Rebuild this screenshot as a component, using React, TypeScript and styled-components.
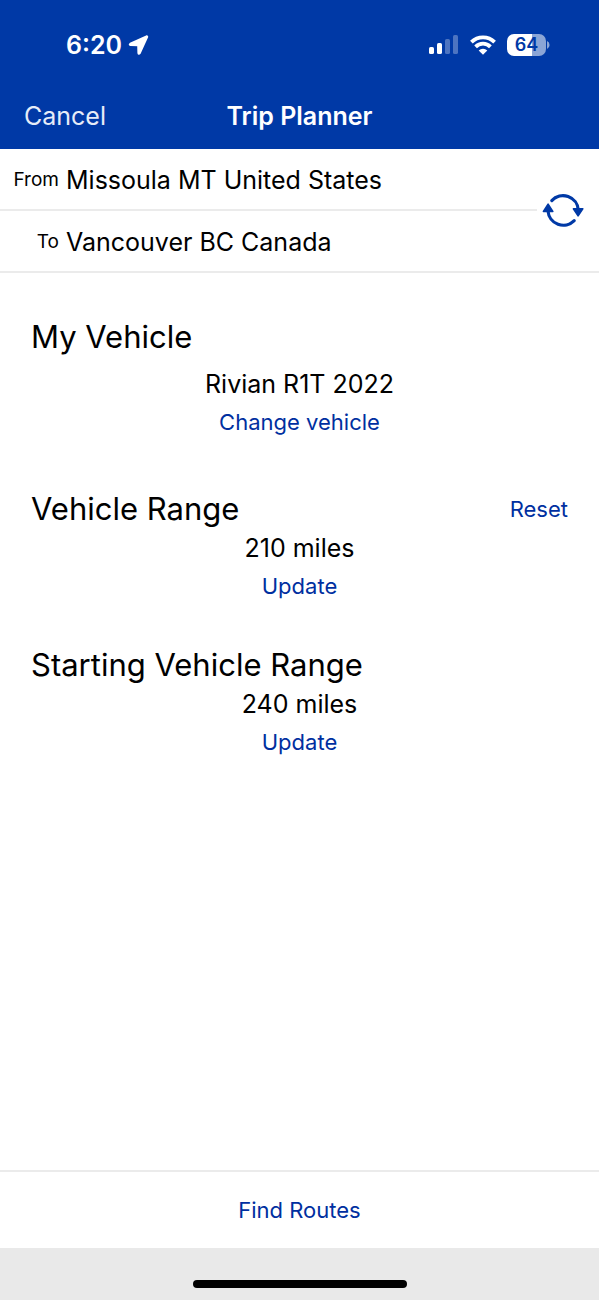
import React from 'react';
import styled, { createGlobalStyle } from 'styled-components';

const GlobalStyle = createGlobalStyle`
  *, *::before, *::after { box-sizing: border-box; }
  body {
    margin: 0;
    background: #fff;
    color: #000;
    font-family: Inter, "Liberation Sans", sans-serif;
  }
  button, input { font: inherit; color: inherit; }
`;

const Screen = styled.div`
  display: flex;
  flex-direction: column;
  min-height: 100vh;
`;

const Header = styled.header`
  background: #0039a6;
  color: #fff;
`;

const StatusBar = styled.div`
  display: flex;
  align-items: center;
  justify-content: space-between;
  height: 82px;
  padding: 8px 49px 0 66px;
`;

const StatusGroup = styled.div<{ $gap: number }>`
  display: flex;
  align-items: center;
  gap: ${(p) => p.$gap}px;
`;

const Clock = styled.span`
  font-size: 25px;
  line-height: 32px;
  font-weight: 600;
`;

const Battery = styled.div`
  display: flex;
  align-items: center;
  gap: 1px;
`;

const BatteryBody = styled.div<{ $level: number }>`
  width: 39px;
  height: 22px;
  border-radius: 7px;
  background: linear-gradient(to right, #fff ${(p) => p.$level}%, #8ba5d6 ${(p) => p.$level}%);
  color: #0039a6;
  font-size: 18px;
  line-height: 22px;
  font-weight: 600;
  text-align: center;
`;

const NavBar = styled.div`
  display: grid;
  grid-template-columns: 1fr auto 1fr;
  align-items: center;
  height: 67px;
  padding: 0 24px;
`;

const Title = styled.h1`
  margin: 0;
  font-size: 25px;
  line-height: 32px;
  font-weight: 600;
`;

const TextButton = styled.button<{ $color?: string; $size?: number }>`
  border: 0;
  padding: 0;
  background: none;
  cursor: pointer;
  color: ${(p) => p.$color ?? '#002fa0'};
  font-size: ${(p) => p.$size ?? 22}px;
  line-height: 32px;
`;

const CancelButton = styled(TextButton)`
  justify-self: start;
`;

const RouteForm = styled.form`
  display: grid;
  grid-template-columns: 1fr 62px;
  border-bottom: 2px solid #ebebeb;
`;

const RouteRow = styled.div<{ $divided?: boolean }>`
  display: flex;
  align-items: center;
  gap: 7px;
  height: ${(p) => (p.$divided ? 62 : 60)}px;
  padding-top: 2px;
  border-bottom: ${(p) => (p.$divided ? '2px solid #ebebeb' : '0')};
`;

const RouteLabel = styled.label`
  flex: 0 0 59px;
  text-align: right;
  font-size: 19px;
  line-height: 32px;
`;

const RouteInput = styled.input`
  flex: 1;
  min-width: 0;
  border: 0;
  padding: 0;
  outline: 0;
  background: none;
  font-size: 25px;
  line-height: 32px;
`;

const SwapButton = styled.button`
  display: flex;
  align-items: center;
  justify-content: center;
  border: 0;
  padding: 2px 10px 0 0;
  background: none;
  cursor: pointer;
`;

const Main = styled.main`
  flex: 1;
  display: flex;
  flex-direction: column;
  gap: 40px;
  padding: 44px 31px;
`;

const Section = styled.section<{ $after?: number }>`
  display: flex;
  flex-direction: column;
  padding-bottom: ${(p) => p.$after ?? 0}px;
`;

const SectionHead = styled.div<{ $space?: number }>`
  display: flex;
  align-items: center;
  justify-content: space-between;
  margin-bottom: ${(p) => p.$space ?? 0}px;
`;

const SectionTitle = styled.h2`
  margin: 0;
  font-size: 31px;
  line-height: 40px;
  font-weight: 400;
`;

const Value = styled.p`
  margin: 0;
  font-size: 25px;
  line-height: 38px;
  text-align: center;
`;

const SectionAction = styled(TextButton)`
  align-self: center;
  line-height: 38px;
`;

const Footer = styled.footer`
  display: flex;
  flex-direction: column;
  border-top: 2px solid #ebebeb;
`;

const FindButton = styled(TextButton)`
  height: 76px;
`;

const HomeArea = styled.div`
  display: flex;
  justify-content: center;
  height: 52px;
  padding-top: 32px;
  background: #e9e9e9;
`;

const HomeIndicator = styled.div`
  width: 214px;
  height: 8px;
  border-radius: 4px;
  background: #000;
`;

const LocationIcon = () => (
  <svg width="21" height="20" viewBox="0 0 20 20" aria-hidden="true">
    <path
      d="M18 1.2 1.8 8.6q-1.4 1.2.2 1.6l7.6.2.2 7.6q.4 1.8 1.6.2L18.8 2q.2-1-.8-.8Z"
      fill="#fff"
      stroke="#fff"
      strokeWidth="1.8"
      strokeLinejoin="round"
    />
  </svg>
);

const SignalIcon = () => (
  <svg width="30" height="20" viewBox="0 0 30 20" aria-hidden="true" fill="#fff">
    <rect x="0" y="12" width="5" height="7" rx="1.6" />
    <rect x="8" y="8" width="5" height="11" rx="1.6" />
    <rect x="16" y="4" width="5" height="15" rx="1.6" opacity=".3" />
    <rect x="24" y="0" width="5" height="19" rx="1.6" opacity=".3" />
  </svg>
);

const WifiIcon = () => (
  <svg width="26" height="20" viewBox="0 0 26 20" aria-hidden="true">
    <g fill="none" stroke="#fff" strokeWidth="3.8">
      <path d="M1.4 7.2a16.4 16.4 0 0 1 23.2 0" />
      <path d="M5.6 11.8a10.4 10.4 0 0 1 14.8 0" />
    </g>
    <path d="M13 19.8 8.7 15.5a6.1 6.1 0 0 1 8.6 0Z" fill="#fff" />
  </svg>
);

const BatteryCap = () => (
  <svg width="3" height="8" viewBox="0 0 3 8" aria-hidden="true">
    <path d="M0 0q2.6 1.2 2.6 4T0 8Z" fill="#8ba5d6" />
  </svg>
);

const SwapIcon = () => (
  <svg width="42" height="36" viewBox="0 0 42 36" aria-hidden="true">
    <g fill="none" stroke="#0039a6" strokeWidth="3.2" strokeLinecap="round">
      <path d="M9.8 7.6A15.3 15.3 0 0 1 36.3 17" />
      <path d="M32.2 27.6A15.3 15.3 0 0 1 6 18" />
    </g>
    <g fill="#0039a6" stroke="#0039a6" strokeWidth="1.6" strokeLinejoin="round">
      <path d="M31.4 15.8h9.4l-4.7 7Z" />
      <path d="M1.4 18.4h9.4L6.1 11.2Z" />
    </g>
  </svg>
);

export default function App() {
  return (
    <Screen>
      <GlobalStyle />
      <Header>
        <StatusBar>
          <StatusGroup $gap={6}>
            <Clock>6:20</Clock>
            <LocationIcon />
          </StatusGroup>
          <StatusGroup $gap={11}>
            <SignalIcon />
            <WifiIcon />
            <Battery>
              <BatteryBody $level={64}>64</BatteryBody>
              <BatteryCap />
            </Battery>
          </StatusGroup>
        </StatusBar>
        <NavBar>
          <CancelButton type="button" $color="#e6ecf8" $size={25}>
            Cancel
          </CancelButton>
          <Title>Trip Planner</Title>
        </NavBar>
      </Header>

      <RouteForm>
        <div>
          <RouteRow $divided>
            <RouteLabel htmlFor="from">From</RouteLabel>
            <RouteInput id="from" defaultValue="Missoula MT United States" />
          </RouteRow>
          <RouteRow>
            <RouteLabel htmlFor="to">To</RouteLabel>
            <RouteInput id="to" defaultValue="Vancouver BC Canada" />
          </RouteRow>
        </div>
        <SwapButton type="button" aria-label="Swap start and destination">
          <SwapIcon />
        </SwapButton>
      </RouteForm>

      <Main>
        <Section $after={8}>
          <SectionHead $space={8}>
            <SectionTitle>My Vehicle</SectionTitle>
          </SectionHead>
          <Value>Rivian R1T 2022</Value>
          <SectionAction type="button">Change vehicle</SectionAction>
        </Section>
        <Section>
          <SectionHead>
            <SectionTitle>Vehicle Range</SectionTitle>
            <TextButton type="button">Reset</TextButton>
          </SectionHead>
          <Value>210 miles</Value>
          <SectionAction type="button">Update</SectionAction>
        </Section>
        <Section>
          <SectionHead>
            <SectionTitle>Starting Vehicle Range</SectionTitle>
          </SectionHead>
          <Value>240 miles</Value>
          <SectionAction type="button">Update</SectionAction>
        </Section>
      </Main>

      <Footer>
        <FindButton type="button">Find Routes</FindButton>
        <HomeArea>
          <HomeIndicator />
        </HomeArea>
      </Footer>
    </Screen>
  );
}
